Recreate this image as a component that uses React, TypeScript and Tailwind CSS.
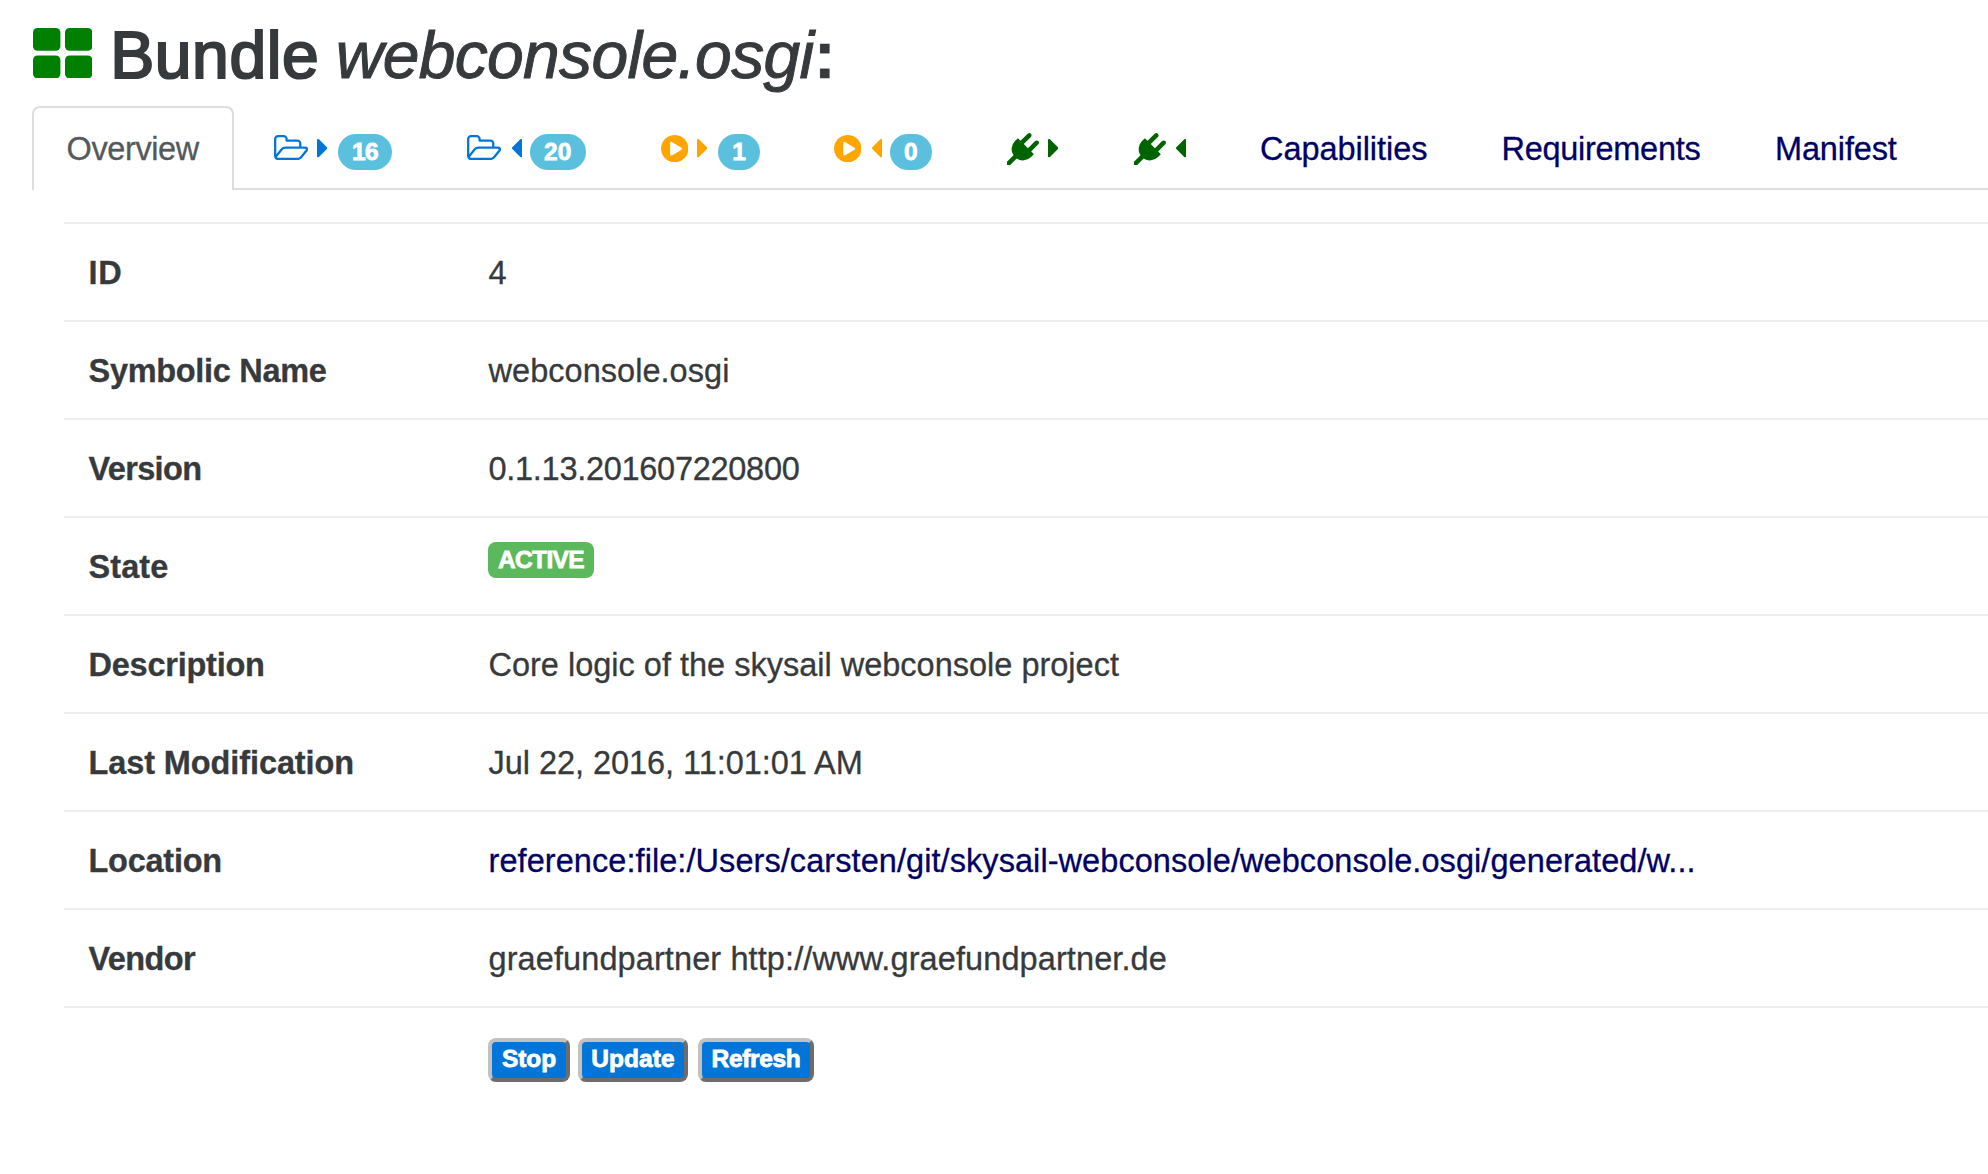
import type { ReactNode } from 'react';

function ThLarge() {
  return (
    <svg viewBox="0 0 1664 1408" className="h-[50.3px] w-[59.4px] fill-[#008000]">
      <rect x="0" y="0" width="768" height="640" rx="128" />
      <rect x="896" y="0" width="768" height="640" rx="128" />
      <rect x="0" y="768" width="768" height="640" rx="128" />
      <rect x="896" y="768" width="768" height="640" rx="128" />
    </svg>
  );
}

function FolderOpen() {
  return (
    <svg viewBox="0 0 1909 1408" className="mt-[10px] h-[25.1px] w-[34.1px] shrink-0 fill-current">
      <path d="M1781 803q0-35-53-35h-1088q-40 0-85.5 21.5t-71.5 52.5l-294 363q-18 24-18 40 0 35 53 35h1088q40 0 86-22t71-53l294-363q18-22 18-39zm-1141-163h768v-160q0-40-28-68t-68-28h-576q-40 0-68-28t-28-68v-64q0-40-28-68t-68-28h-320q-40 0-68 28t-28 68v853l256-315q44-53 116-87.5t140-34.5zm1269 163q0 62-46 120l-295 363q-43 53-116 87.5t-140 34.5h-1088q-92 0-158-66t-66-158v-960q0-92 66-158t158-66h320q92 0 158 66t66 158v32h544q92 0 158 66t66 158v160h192q54 0 99 24.5t67 70.5q15 32 15 68z" />
    </svg>
  );
}

function PlayCircle() {
  return (
    <svg viewBox="0 0 1536 1536" className="mt-[9.7px] h-[27.4px] w-[27.4px] shrink-0 fill-current">
      <path d="M768 0q209 0 385.5 103t279.5 279.5 103 385.5-103 385.5-279.5 279.5-385.5 103-385.5-103-279.5-279.5-103-385.5 103-385.5 279.5-279.5 385.5-103zm384 823q32-18 32-55t-32-55l-544-320q-31-19-64-1-32 19-32 56v640q0 37 32 56 16 8 32 8 17 0 32-9z" />
    </svg>
  );
}

function Plug() {
  return (
    <svg viewBox="0 0 1792 1792" className="mt-[7.6px] h-[32px] w-[32px] shrink-0 fill-current">
      <path d="M1755 453q37 38 37 90.5t-37 90.5l-401 400 150 150-160 160q-163 163-389.5 186.5t-411.5-100.5l-362 362h-181v-181l362-362q-124-185-100.5-411.5t186.5-389.5l160-160 150 150 400-401q38-37 91-37t90 37 37 90.5-37 90.5l-400 401 234 234 401-400q38-37 91-37t90 37z" />
    </svg>
  );
}

function CaretRight({ className }: { className: string }) {
  return (
    <svg viewBox="0 0 576 1024" className={`mt-[14.4px] h-[18.3px] w-[10.3px] shrink-0 fill-current ${className}`}>
      <path d="M576 512q0 26-19 45l-448 448q-19 19-45 19t-45-19-19-45v-896q0-26 19-45t45-19 45 19l448 448q19 19 19 45z" />
    </svg>
  );
}

function CaretLeft({ className }: { className: string }) {
  return (
    <svg viewBox="0 0 576 1024" className={`mt-[14.4px] h-[18.3px] w-[10.3px] shrink-0 fill-current ${className}`}>
      <path d="M576 64v896q0 26-19 45t-45 19-45-19l-448-448q-19-19-19-45t19-45l448-448q19-19 45-19t45 19 19 45z" />
    </svg>
  );
}

function Pill({ className, children }: { className: string; children: ReactNode }) {
  return (
    <span
      className={`mt-[9px] h-[36px] shrink-0 rounded-full bg-[#5bc0de] text-center text-[24.5px] leading-[35px] font-bold text-white [-webkit-text-stroke:0.8px_white] ${className}`}
    >
      {children}
    </span>
  );
}

function IconTab({ className, children }: { className: string; children: ReactNode }) {
  return <li className={`flex shrink-0 items-start pt-[19px] ${className}`}>{children}</li>;
}

function TextTab({ className, children }: { className: string; children: ReactNode }) {
  return (
    <li className={`shrink-0 pt-[19px] text-[32.5px] leading-[48px] whitespace-nowrap text-[#000066] ${className}`}>
      {children}
    </li>
  );
}

type Row = { label: string; labelClass: string; value: ReactNode };

const rows: Row[] = [
  { label: 'ID', labelClass: 'tracking-[0.6px]', value: '4' },
  {
    label: 'Symbolic Name',
    labelClass: 'tracking-[-0.3px]',
    value: <span className="tracking-[0.04px]">webconsole.osgi</span>,
  },
  {
    label: 'Version',
    labelClass: 'tracking-[-0.64px]',
    value: <span className="tracking-[-0.28px]">0.1.13.201607220800</span>,
  },
  {
    label: 'State',
    labelClass: 'tracking-[0.08px]',
    value: (
      <span className="-mt-[1px] -ml-[0.5px] block h-[36px] w-[106px] rounded-[8px] bg-[#5cb85c] text-center text-[24.5px] leading-[35px] font-bold tracking-[-0.62px] text-white [-webkit-text-stroke:0.8px_white]">
        ACTIVE
      </span>
    ),
  },
  {
    label: 'Description',
    labelClass: 'tracking-[-0.24px]',
    value: 'Core logic of the skysail webconsole project',
  },
  {
    label: 'Last Modification',
    labelClass: 'tracking-[-0.1px]',
    value: <span className="tracking-[-0.04px]">Jul 22, 2016, 11:01:01 AM</span>,
  },
  {
    label: 'Location',
    labelClass: 'tracking-[-0.25px]',
    value: (
      <a className="tracking-[0.07px] text-[#000066]">
        reference:file:/Users/carsten/git/skysail-webconsole/webconsole.osgi/generated/w...
      </a>
    ),
  },
  {
    label: 'Vendor',
    labelClass: 'tracking-[-0.6px]',
    value: <span className="tracking-[0.1px]">graefundpartner http://www.graefundpartner.de</span>,
  },
];

function ActionButton({ className, children }: { className: string; children: ReactNode }) {
  return (
    <button
      className={`h-[44px] rounded-[8px] border-4 border-t-[#c1c1c1] border-r-[#6e6d6b] border-b-[#6e6d6b] border-l-[#c1c1c1] bg-[#0275d8] p-0 pb-[3px] text-center text-[24.5px] leading-[33px] font-bold text-white [-webkit-text-stroke:0.8px_white] ${className}`}
    >
      {children}
    </button>
  );
}

export default function App() {
  return (
    <div className="h-[1174px] w-[1988px] overflow-hidden bg-white font-['Liberation_Sans',Arial,sans-serif] text-[#373a3c] [-webkit-text-stroke:0.3px_currentColor]">
      <h1 className="flex h-[106px] items-start pt-[20px] pl-[32.6px] text-[66px] leading-[70px] whitespace-nowrap">
        <span className="mt-[7.6px] w-[77.6px] shrink-0">
          <ThLarge />
        </span>
        <span className="w-[225.5px] shrink-0 tracking-[0.6px] [-webkit-text-stroke:2.2px_#373a3c]">Bundle</span>
        <em className="w-[478px] shrink-0 tracking-[-0.68px] [-webkit-text-stroke:1px_#373a3c]">webconsole.osgi</em>
        <span className="font-bold">:</span>
      </h1>

      <ul className="ml-[32px] flex h-[84px] border-b-2 border-[#dddddd]">
        <li className="h-[84px] w-[202px] shrink-0 rounded-t-[8px] border-2 border-b-0 border-[#dddddd] bg-white pt-[17px] pl-[32.5px] text-[32.5px] leading-[48px] tracking-[-0.38px] text-[#55595c]">
          Overview
        </li>
        <IconTab className="ml-[6px] w-[193.5px] pl-[33.5px] text-[#0275d8]">
          <FolderOpen />
          <CaretRight className="ml-[9.1px]" />
          <Pill className="ml-[11px] w-[54px] tracking-[-0.6px]">16</Pill>
        </IconTab>
        <IconTab className="w-[193.8px] pl-[33.6px] text-[#0275d8]">
          <FolderOpen />
          <CaretLeft className="ml-[10.6px]" />
          <Pill className="ml-[7.8px] w-[56px] tracking-[0.3px]">20</Pill>
        </IconTab>
        <IconTab className="w-[172.7px] pl-[33.4px] text-[#ffa500]">
          <PlayCircle />
          <CaretRight className="ml-[9px]" />
          <Pill className="ml-[10.7px] w-[42px]">1</Pill>
        </IconTab>
        <IconTab className="w-[172.7px] pl-[33.6px] text-[#ffa500]">
          <PlayCircle />
          <CaretLeft className="ml-[10.6px]" />
          <Pill className="ml-[8px] w-[42px]">0</Pill>
        </IconTab>
        <IconTab className="w-[127.3px] pl-[34px] text-[#006400]">
          <Plug />
          <CaretRight className="ml-[9.2px]" />
        </IconTab>
        <IconTab className="w-[126px] pl-[33.8px] text-[#006400]">
          <Plug />
          <CaretLeft className="ml-[10.4px]" />
        </IconTab>
        <TextTab className="w-[241px] pl-[34px] tracking-[-0.05px]">Capabilities</TextTab>
        <TextTab className="w-[273px] pl-[34.5px] tracking-[-0.28px]">Requirements</TextTab>
        <TextTab className="pl-[35px] tracking-[-0.13px]">Manifest</TextTab>
      </ul>

      <div className="mt-[32px] ml-[64px] text-[32.5px] leading-[48px] whitespace-nowrap">
        {rows.map((row) => (
          <div key={row.label} className="flex h-[98px] border-t-2 border-[#eceeef] pt-[25px] pl-[24.5px]">
            <div className={`w-[400px] shrink-0 font-bold ${row.labelClass}`}>{row.label}</div>
            <div>{row.value}</div>
          </div>
        ))}
        <div className="flex items-start border-t-2 border-[#eceeef] pt-[30px] pl-[424px]">
          <ActionButton className="w-[82px] tracking-[-0.09px]">Stop</ActionButton>
          <ActionButton className="ml-[8px] w-[110px] tracking-[0.06px]">Update</ActionButton>
          <ActionButton className="ml-[10px] w-[116px] tracking-[-0.35px]">Refresh</ActionButton>
        </div>
      </div>
    </div>
  );
}
